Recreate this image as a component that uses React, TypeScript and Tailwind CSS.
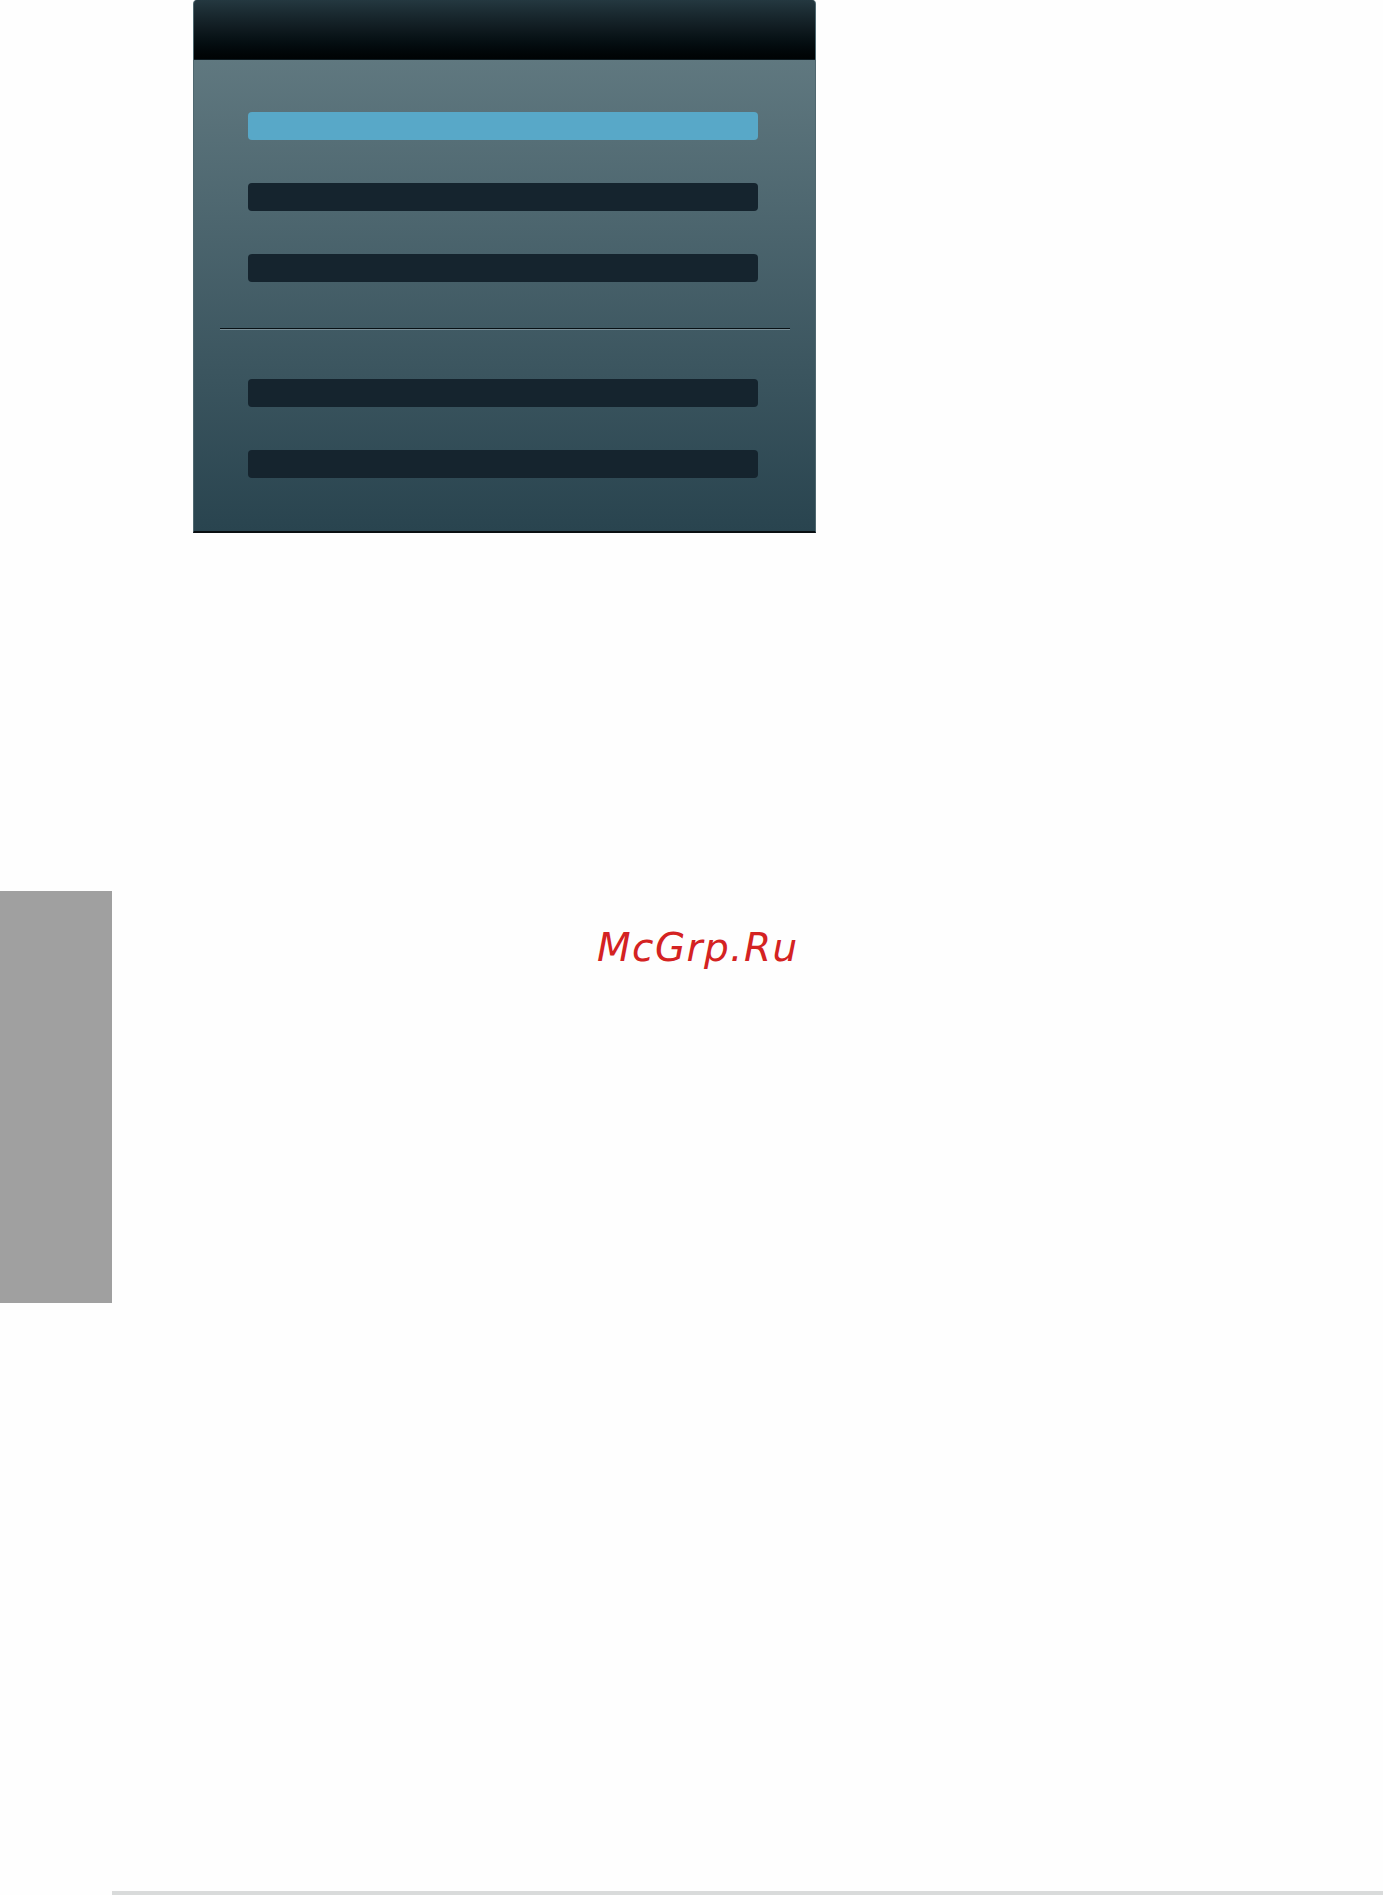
import React from "react";

const upperItems = ["active", "idle", "idle"];
const lowerItems = ["idle", "idle"];

function MenuBar({ active = false }: { active?: boolean }) {
  return (
    <div
      className={`h-[28px] w-[510px] rounded-[4px] ${
        active ? "bg-[#58a8c8]" : "bg-[#15242e]"
      }`}
    />
  );
}

export default function App() {
  return (
    <div className="relative h-[1895px] w-[1383px] overflow-hidden bg-[#fefefe] font-['DejaVu_Sans',sans-serif]">
      {/* menu panel */}
      <div className="ml-[193px] flex h-[533px] w-[623px] flex-col overflow-hidden rounded-t-[4px] border-x border-[#4f6870] border-b-[2px] border-b-[#0a0f12] bg-gradient-to-b from-[#677f86] to-[#29444f]">
        <div className="h-[60px] shrink-0 border-b border-[#0d1a20] bg-gradient-to-b from-[#243840] via-[#0f1a1f] to-[#000304]" />
        <div className="flex flex-col items-start pl-[54px] pt-[52px]">
          <div className="flex flex-col gap-[43px]">
            {upperItems.map((s, i) => (
              <MenuBar key={i} active={s === "active"} />
            ))}
          </div>
        </div>
        <div className="mx-[26px] mt-[46px] h-[2px] w-[570px] border-b border-[#7a8f98] bg-[#081115]" />
        <div className="flex flex-col gap-[43px] pl-[54px] pt-[49px]">
          {lowerItems.map((s, i) => (
            <MenuBar key={i} active={s === "active"} />
          ))}
        </div>
      </div>

      {/* side tab and mark */}
      <div className="mt-[358px] flex">
        <div className="h-[412px] w-[112px] bg-[#a0a0a0]" />
        <div className="ml-[485px] pt-[37px] text-[39px] italic leading-none tracking-[1.4px] text-[#d42222]">
          McGrp.Ru
        </div>
      </div>

      {/* footer rule */}
      <div className="ml-[112px] mt-[588px] h-[4px] bg-[#d9dbdb]" />
    </div>
  );
}
